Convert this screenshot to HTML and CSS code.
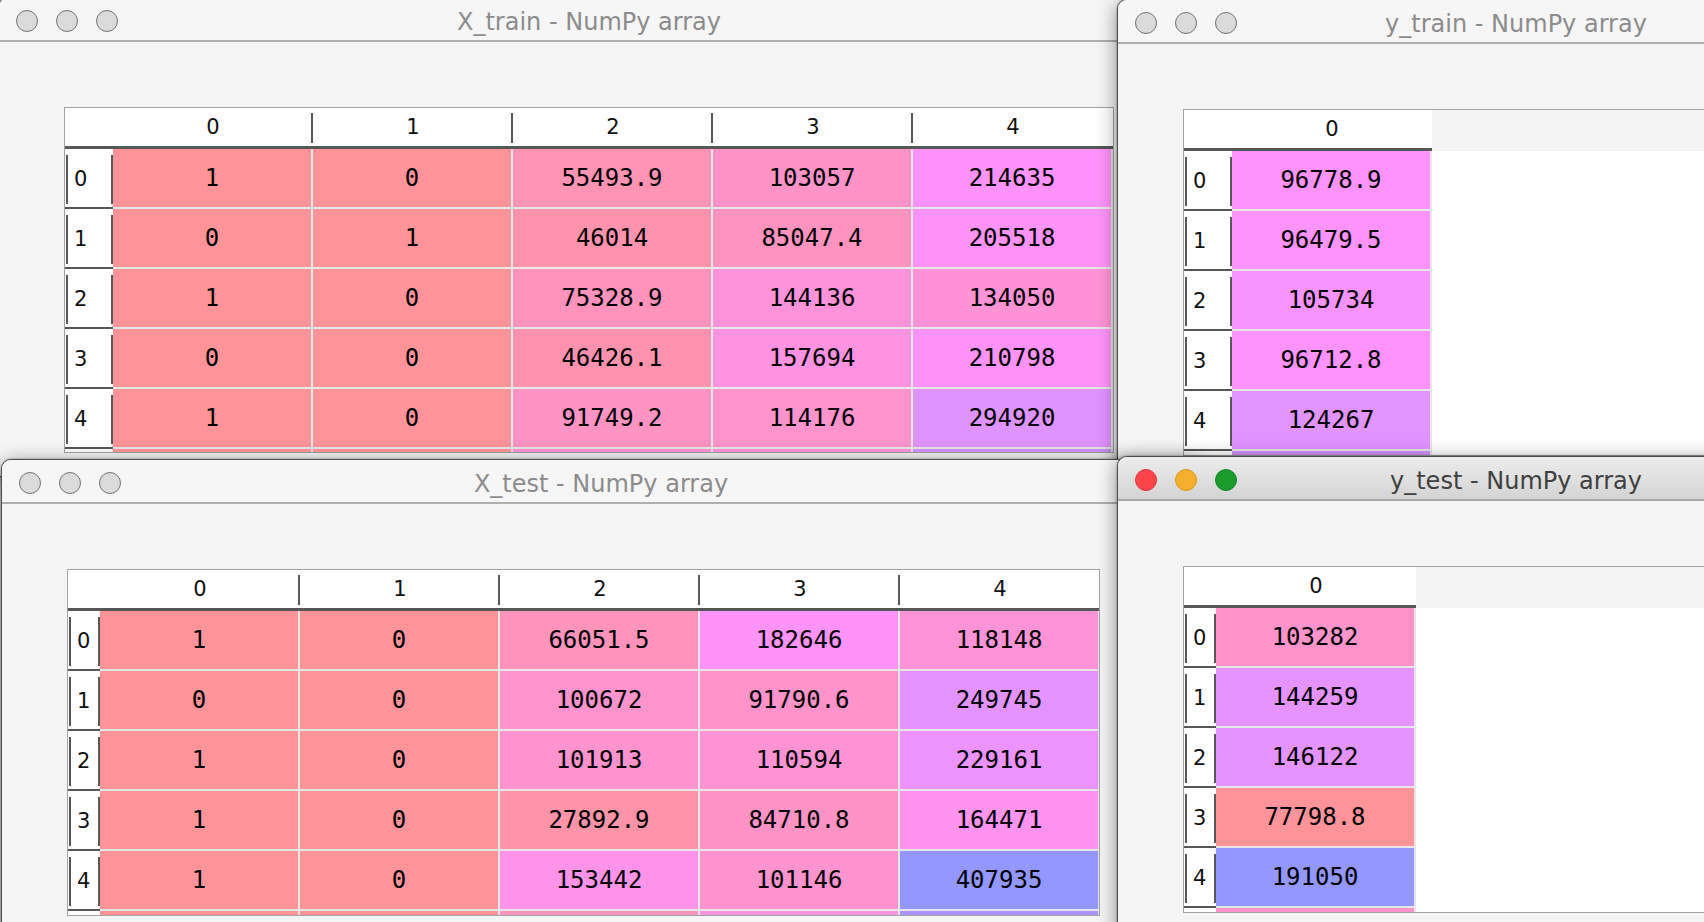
FILE: index.html
```html
<!DOCTYPE html>
<html>
<head>
<meta charset="utf-8">
<title>NumPy arrays</title>
<link rel="stylesheet" href="styles.css">
</head>
<body>
<div class="desktop">

  <section class="win win-xtrain">
    <header class="titlebar">
      <div class="lights"><span class="light"></span><span class="light"></span><span class="light"></span></div>
      <div class="title">X_train - NumPy array</div>
    </header>
    <div class="win-body">
      <div class="grid grid-wide frame-xtrain">
        <div class="hrow"><div class="corner"></div><div class="hcell">0</div><div class="hcell">1</div><div class="hcell">2</div><div class="hcell">3</div><div class="hcell">4</div></div>
        <div class="row"><div class="rh">0</div><div class="cell" style="background:#ff939a">1</div><div class="cell" style="background:#ff939a">0</div><div class="cell" style="background:#ff93b3">55493.9</div><div class="cell" style="background:#ff93c8">103057</div><div class="cell" style="background:#ff93fb">214635</div></div>
        <div class="row"><div class="rh">1</div><div class="cell" style="background:#ff939a">0</div><div class="cell" style="background:#ff939a">1</div><div class="cell" style="background:#ff93ae">46014</div><div class="cell" style="background:#ff93c0">85047.4</div><div class="cell" style="background:#ff93f7">205518</div></div>
        <div class="row"><div class="rh">2</div><div class="cell" style="background:#ff939a">1</div><div class="cell" style="background:#ff939a">0</div><div class="cell" style="background:#ff93bc">75328.9</div><div class="cell" style="background:#ff93db">144136</div><div class="cell" style="background:#ff93d6">134050</div></div>
        <div class="row"><div class="rh">3</div><div class="cell" style="background:#ff939a">0</div><div class="cell" style="background:#ff939a">0</div><div class="cell" style="background:#ff93af">46426.1</div><div class="cell" style="background:#ff93e1">157694</div><div class="cell" style="background:#ff93f9">210798</div></div>
        <div class="row"><div class="rh">4</div><div class="cell" style="background:#ff939a">1</div><div class="cell" style="background:#ff939a">0</div><div class="cell" style="background:#ff93c3">91749.2</div><div class="cell" style="background:#ff93cd">114176</div><div class="cell" style="background:#df93ff">294920</div></div>
        <div class="row"><div class="rh"></div><div class="cell" style="background:#ff939a"></div><div class="cell" style="background:#ff939a"></div><div class="cell" style="background:#ff93d5"></div><div class="cell" style="background:#ff93dc"></div><div class="cell" style="background:#d293ff"></div></div>
      </div>
    </div>
  </section>

  <section class="win win-ytrain">
    <header class="titlebar">
      <div class="lights"><span class="light"></span><span class="light"></span><span class="light"></span></div>
      <div class="title">y_train - NumPy array</div>
    </header>
    <div class="win-body">
      <div class="grid grid-wide frame-y">
        <div class="hrow"><div class="corner"></div><div class="hcell">0</div></div>
        <div class="row"><div class="rh">0</div><div class="cell" style="background:#ff93fd">96778.9</div></div>
        <div class="row"><div class="rh">1</div><div class="cell" style="background:#ff93fc">96479.5</div></div>
        <div class="row"><div class="rh">2</div><div class="cell" style="background:#f793ff">105734</div></div>
        <div class="row"><div class="rh">3</div><div class="cell" style="background:#ff93fd">96712.8</div></div>
        <div class="row"><div class="rh">4</div><div class="cell" style="background:#e193ff">124267</div></div>
        <div class="row"><div class="rh"></div><div class="cell" style="background:#d493ff"></div></div>
      </div>
    </div>
  </section>

  <section class="win win-xtest">
    <header class="titlebar">
      <div class="lights"><span class="light"></span><span class="light"></span><span class="light"></span></div>
      <div class="title">X_test - NumPy array</div>
    </header>
    <div class="win-body">
      <div class="grid grid-narrow frame-xtest">
        <div class="hrow"><div class="corner"></div><div class="hcell">0</div><div class="hcell">1</div><div class="hcell">2</div><div class="hcell">3</div><div class="hcell">4</div></div>
        <div class="row"><div class="rh">0</div><div class="cell" style="background:#ff939a">1</div><div class="cell" style="background:#ff939a">0</div><div class="cell" style="background:#ff93bc">66051.5</div><div class="cell" style="background:#ff93f9">182646</div><div class="cell" style="background:#ff93d7">118148</div></div>
        <div class="row"><div class="rh">1</div><div class="cell" style="background:#ff939a">0</div><div class="cell" style="background:#ff939a">0</div><div class="cell" style="background:#ff93ce">100672</div><div class="cell" style="background:#ff93ca">91790.6</div><div class="cell" style="background:#e293ff">249745</div></div>
        <div class="row"><div class="rh">2</div><div class="cell" style="background:#ff939a">1</div><div class="cell" style="background:#ff939a">0</div><div class="cell" style="background:#ff93cf">101913</div><div class="cell" style="background:#ff93d4">110594</div><div class="cell" style="background:#ec93ff">229161</div></div>
        <div class="row"><div class="rh">3</div><div class="cell" style="background:#ff939a">1</div><div class="cell" style="background:#ff939a">0</div><div class="cell" style="background:#ff93a8">27892.9</div><div class="cell" style="background:#ff93c6">84710.8</div><div class="cell" style="background:#ff93f0">164471</div></div>
        <div class="row"><div class="rh">4</div><div class="cell" style="background:#ff939a">1</div><div class="cell" style="background:#ff939a">0</div><div class="cell" style="background:#ff93ea">153442</div><div class="cell" style="background:#ff93cf">101146</div><div class="cell" style="background:#9397ff">407935</div></div>
        <div class="row"><div class="rh"></div><div class="cell" style="background:#ff939a"></div><div class="cell" style="background:#ff939a"></div><div class="cell" style="background:#ff93bf"></div><div class="cell" style="background:#ff93dc"></div><div class="cell" style="background:#ab93ff"></div></div>
      </div>
    </div>
  </section>

  <section class="win win-ytest active">
    <header class="titlebar">
      <div class="lights"><span class="light close"></span><span class="light min"></span><span class="light zoom"></span></div>
      <div class="title">y_test - NumPy array</div>
    </header>
    <div class="win-body">
      <div class="grid grid-narrow frame-y">
        <div class="hrow"><div class="corner"></div><div class="hcell">0</div></div>
        <div class="row"><div class="rh">0</div><div class="cell" style="background:#ff93ca">103282</div></div>
        <div class="row"><div class="rh">1</div><div class="cell" style="background:#e793ff">144259</div></div>
        <div class="row"><div class="rh">2</div><div class="cell" style="background:#e493ff">146122</div></div>
        <div class="row"><div class="rh">3</div><div class="cell" style="background:#ff939a">77798.8</div></div>
        <div class="row"><div class="rh">4</div><div class="cell" style="background:#9397ff">191050</div></div>
        <div class="row"><div class="rh"></div><div class="cell" style="background:#ff93cd"></div></div>
      </div>
    </div>
  </section>

</div>
</body>
</html>
```

FILE: styles.css
```css
* { box-sizing: border-box; }

html, body {
  margin: 0;
  padding: 0;
}

body {
  width: 1704px;
  height: 922px;
  overflow: hidden;
  background: #e9e9e9;
  font-family: "DejaVu Sans", sans-serif;
}

.desktop {
  position: relative;
  width: 1704px;
  height: 922px;
  overflow: hidden;
}

/* ---------- windows ---------- */
.win {
  position: absolute;
  display: flex;
  flex-direction: column;
  background: #f5f5f5;
  border: 1px solid #4e4e4e;
  border-radius: 10px 10px 0 0;
  box-shadow: 0 0 2px rgba(0, 0, 0, 0.45), 0 4px 20px rgba(0, 0, 0, 0.45);
  overflow: hidden;
}

.win-xtrain { left: -2px; top: -3px; width: 1182px; height: 480px; z-index: 1; }
.win-ytrain { left: 1117px; top: -1px; width: 798px; height: 480px; z-index: 2; }
.win-xtest  { left: 1px;   top: 459px; width: 1200px; height: 480px; z-index: 3; }
.win-ytest  { left: 1117px; top: 456px; width: 798px; height: 480px; z-index: 4; }

.titlebar {
  flex: none;
  height: 44px;
  padding: 4px 17px 0;
  display: grid;
  grid-template-columns: 1fr auto 1fr;
  align-items: center;
  background: #f6f6f6;
  border-bottom: 2px solid #afafaf;
}

.lights {
  display: flex;
  gap: 18px;
}

.light {
  width: 22px;
  height: 22px;
  border-radius: 50%;
  background: #dbdbdb;
  border: 1.5px solid #747474;
}

.title {
  font-family: "DejaVu Sans", sans-serif;
  font-size: 24px;
  color: #8c8c8c;
  white-space: nowrap;
  line-height: 1;
  padding-top: 2px;
}

.active .titlebar {
  background: linear-gradient(#ececec, #d4d4d4);
  border-bottom-color: #a9a9a9;
}
.active .title { color: #404040; }
.active .light.close { background: #fd444b; border-color: #d9363c; }
.active .light.min   { background: #f4af2c; border-color: #d8981f; }
.active .light.zoom  { background: #1a9c2c; border-color: #138526; }

.win-body {
  flex: 1;
  padding: 65px 0 0 65px;
}

/* ---------- array grid ---------- */
.grid {
  border: 1px solid #a3a3a3;
  background: #ffffff;
  overflow: hidden;
}

.grid-wide   { --rh: 48px; }
.grid-narrow { --rh: 32px; }

.frame-xtrain { width: 1050px; height: 346px; }
.frame-xtest  { width: 1033px; height: 347px; }
.frame-y      { width: 700px;  height: 347px; }

.hrow {
  display: flex;
  height: 41px;
  background: #f4f4f4;
}

.corner {
  flex: none;
  width: var(--rh);
  background: #ffffff;
  border-bottom: 3px solid #575757;
}

.hcell {
  flex: none;
  width: 200px;
  display: flex;
  align-items: center;
  justify-content: center;
  background: #ffffff;
  border-bottom: 3px solid #575757;
  font-family: "DejaVu Sans", sans-serif;
  font-size: 21px;
  color: #111;
}

.hcell:not(:last-child) {
  background:
    linear-gradient(#575757, #575757) right 0 top 5px / 2px 30px no-repeat,
    #ffffff;
}

.row {
  display: flex;
  height: 60px;
}

.rh {
  flex: none;
  width: var(--rh);
  display: flex;
  align-items: center;
  padding-left: 9px;
  font-family: "DejaVu Sans", sans-serif;
  font-size: 21px;
  color: #111;
  background:
    linear-gradient(#575757, #575757) left 1px top 6px / 2px calc(100% - 11px) no-repeat,
    linear-gradient(#575757, #575757) right 0 top 6px / 2px calc(100% - 11px) no-repeat,
    linear-gradient(#575757, #575757) left 0 bottom 0 / 100% 2px no-repeat,
    #ffffff;
}

.cell {
  flex: none;
  width: 200px;
  display: flex;
  align-items: center;
  justify-content: center;
  border-right: 2px solid #e7e7e7;
  border-bottom: 2px solid #e7e7e7;
  font-family: "DejaVu Sans Mono", "Liberation Mono", monospace;
  font-size: 24px;
  color: #000;
}
```
